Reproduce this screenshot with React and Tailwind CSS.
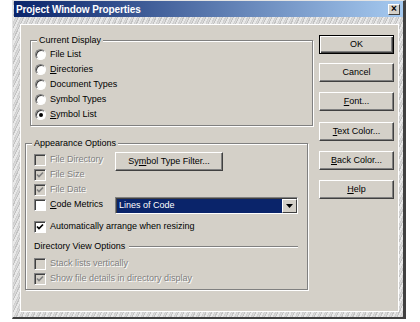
import React from "react";

const font = "font-['Liberation_Sans',Arial,sans-serif]";

function Check({ checked, disabled }) {
  return (
    <span
      className={`w-[12px] h-[12px] shrink-0 flex items-center justify-center border border-t-[#808080] border-l-[#808080] border-r-white border-b-white shadow-[inset_1px_1px_0_#404040] ${
        disabled ? "bg-[#d4d0c8]" : "bg-white"
      }`}
    >
      {checked && (
        <svg width="8" height="8" viewBox="0 0 8 8">
          <polyline
            points="1,3.5 3,5.5 7,1.5"
            fill="none"
            stroke={disabled ? "#808080" : "#000"}
            strokeWidth="1.7"
          />
        </svg>
      )}
    </span>
  );
}

function Radio({ on }) {
  return (
    <span className="w-[11px] h-[11px] shrink-0 rounded-full bg-white border border-t-[#808080] border-l-[#808080] border-r-white border-b-white shadow-[inset_1px_1px_0_#404040] flex items-center justify-center">
      {on && <span className="w-[4px] h-[4px] rounded-full bg-black" />}
    </span>
  );
}

function Btn({ children, def, className = "" }) {
  return (
    <div
      className={`h-[19px] flex items-center justify-center bg-[#d4d0c8] ${
        def
          ? "border border-black shadow-[inset_1px_1px_0_#fff,inset_-1px_-1px_0_#404040,inset_-2px_-2px_0_#808080]"
          : "border border-t-white border-l-white border-r-[#404040] border-b-[#404040] shadow-[inset_-1px_-1px_0_#808080]"
      } ${className}`}
    >
      {children}
    </div>
  );
}

function Group({ label, className, children }) {
  return (
    <div
      className={`relative border border-[#808080] shadow-[inset_1px_1px_0_#fff,1px_1px_0_#fff] ${className}`}
    >
      <span className="absolute -top-[7px] left-[6px] px-[2px] bg-[#d4d0c8] leading-[13px]">
        {label}
      </span>
      {children}
    </div>
  );
}

function Row({ children }) {
  return <div className="h-[15px] flex items-center gap-[4px]">{children}</div>;
}

const dis = "text-[#808080] [text-shadow:1px_1px_0_#fff]";

export default function App() {
  return (
    <div className={`w-[420px] h-[322px] bg-white pl-[12px] overflow-hidden ${font} text-[9px] text-black`}>
      <div className="w-[394px] h-[319px] flex flex-col border-t border-l border-[#e4e4e4] border-r-[3px] border-b-[2px] border-r-[#404040] border-b-[#404040] bg-[repeating-linear-gradient(115deg,#dadada_0_1px,#c2c2c2_1px_2px,#e8e8e8_2px_4px,#cfcfcf_4px_5px)]">
        {/* title bar */}
        <div className="ml-[1px] h-[16px] flex items-center justify-between bg-[linear-gradient(90deg,#0a246a,#a6caf0)] pl-[2px] pr-[3px]">
          <span className="text-white font-bold text-[10px] tracking-[-0.1px]">
            Project Window Properties
          </span>
          <span className="w-[12px] h-[11px] flex items-center justify-center bg-[#d4d0c8] border border-t-white border-l-white border-r-[#404040] border-b-[#404040] text-[10px] font-bold leading-none">
            ×
          </span>
        </div>

        {/* client area */}
        <div className="ml-[7px] mt-[7px] w-[379px] h-[288px] bg-[#d4d0c8] border border-white flex items-start">
          <div className="flex flex-col">
            <Group label="Current Display" className="ml-[9px] mt-[15px] w-[283px] h-[86px] pt-[6px] pl-[4px]">
              <Row>
                <Radio />
                <span>File List</span>
              </Row>
              <Row>
                <Radio />
                <span>
                  <u>D</u>irectories
                </span>
              </Row>
              <Row>
                <Radio />
                <span>Document Types</span>
              </Row>
              <Row>
                <Radio />
                <span>Symbol Types</span>
              </Row>
              <Row>
                <Radio on />
                <span>
                  <u>S</u>ymbol List
                </span>
              </Row>
            </Group>

            <Group label="Appearance Options" className="ml-[4px] mt-[17px] w-[283px] h-[147px] pt-[8px] pl-[8px]">
              <div className="flex">
                <div className="w-[81px] flex flex-col">
                  <Row>
                    <Check disabled />
                    <span className={dis}>File Directory</span>
                  </Row>
                  <Row>
                    <Check checked disabled />
                    <span className={dis}>File Size</span>
                  </Row>
                  <Row>
                    <Check checked disabled />
                    <span className={dis}>File Date</span>
                  </Row>
                  <Row>
                    <Check />
                    <span>
                      <u>C</u>ode Metrics
                    </span>
                  </Row>
                </div>
                <div className="flex flex-col">
                  <Btn className="w-[108px]">
                    <span>
                      Sy<u>m</u>bol Type Filter...
                    </span>
                  </Btn>
                  <div className="mt-[26px] w-[183px] h-[17px] flex border border-t-[#808080] border-l-[#808080] border-r-white border-b-white shadow-[inset_1px_1px_0_#404040]">
                    <div className="flex-1 bg-[#0a246a] text-white pl-[2px] flex items-center ml-[1px] mt-[1px]">
                      Lines of Code
                    </div>
                    <div className="w-[15px] mt-[1px] flex items-center justify-center bg-[#d4d0c8] border border-t-white border-l-white border-r-[#404040] border-b-[#404040]">
                      <svg width="7" height="4" viewBox="0 0 7 4">
                        <polygon points="0,0 7,0 3.5,4" fill="#000" />
                      </svg>
                    </div>
                  </div>
                </div>
              </div>
              <div className="mt-[5px]">
                <Row>
                  <Check checked />
                  <span>Automatically arrange when resizing</span>
                </Row>
              </div>
              <div className="mt-[6px] h-[14px] flex items-center gap-[4px] mr-[9px]">
                <span>Directory View Options</span>
                <span className="flex-1 h-[2px] border-t border-[#808080] border-b border-b-white" />
              </div>
              <div className="mt-[2px]">
                <Row>
                  <Check disabled />
                  <span className={dis}>Stack lists vertically</span>
                </Row>
                <Row>
                  <Check checked disabled />
                  <span className={dis}>Show file details in directory display</span>
                </Row>
              </div>
            </Group>
          </div>

          <div className="ml-[6px] mt-[10px] w-[75px] flex flex-col">
            <Btn def>OK</Btn>
            <Btn className="mt-[9px]">Cancel</Btn>
            <Btn className="mt-[10px]">
              <span>
                <u>F</u>ont...
              </span>
            </Btn>
            <Btn className="mt-[11px]">
              <span>
                <u>T</u>ext Color...
              </span>
            </Btn>
            <Btn className="mt-[10px]">
              <span>
                <u>B</u>ack Color...
              </span>
            </Btn>
            <Btn className="mt-[10px]">
              <span>
                <u>H</u>elp
              </span>
            </Btn>
          </div>
        </div>
      </div>
    </div>
  );
}
